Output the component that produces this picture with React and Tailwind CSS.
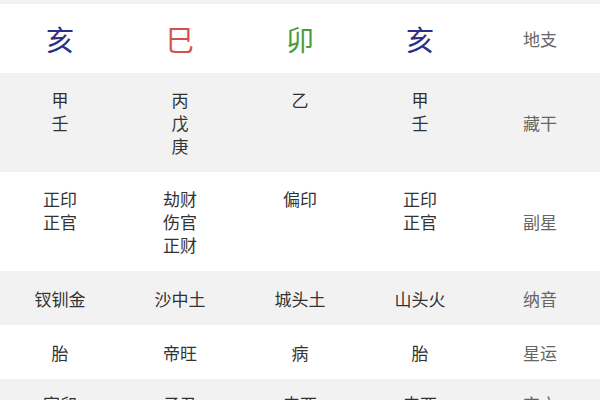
const top = [
  { c: '亥', cls: 'text-[#27318b]' },
  { c: '巳', cls: 'text-[#d5504b]' },
  { c: '卯', cls: 'text-[#4b9a3c]' },
  { c: '亥', cls: 'text-[#27318b]' },
]

const rows = [
  { label: '藏干', bg: 'bg-[#f2f2f2]', pad: 'py-[15px]', cols: [['甲', '壬'], ['丙', '戊', '庚'], ['乙'], ['甲', '壬']] },
  { label: '副星', bg: 'bg-white', pad: 'py-[15px]', cols: [['正印', '正官'], ['劫财', '伤官', '正财'], ['偏印'], ['正印', '正官']] },
  { label: '纳音', bg: 'bg-[#f2f2f2]', pad: 'py-[15.5px]', cols: [['钗钏金'], ['沙中土'], ['城头土'], ['山头火']] },
  { label: '星运', bg: 'bg-white', pad: 'py-[15.5px]', cols: [['胎'], ['帝旺'], ['病'], ['胎']] },
  { label: '空亡', bg: 'bg-[#f2f2f2]', pad: 'py-[13px]', cols: [['寅卯'], ['子丑'], ['申酉'], ['申酉']] },
]

const App = () => {
  return (
    <div className="w-[600px] h-[400px] overflow-hidden bg-white font-['Noto_Sans_CJK_SC',sans-serif]">
      <div className="h-[4px] bg-[#f2f2f2]"></div>
      <div className="grid grid-cols-5 h-[69px] items-center bg-white">
        {top.map((t, i) => (
          <div key={i} className={'text-center text-[28px] leading-none ' + t.cls}>{t.c}</div>
        ))}
        <div className="text-center text-[17px] text-[#666]">地支</div>
      </div>
      {rows.map((r, i) => (
        <div key={i} className={'grid grid-cols-5 ' + r.pad + ' ' + r.bg}>
          {r.cols.map((col, j) => (
            <div key={j} className="flex flex-col items-center text-[17px] leading-[23px] text-[#333]">
              {col.map((s, k) => <div key={k}>{s}</div>)}
            </div>
          ))}
          <div className="flex items-center justify-center text-[17px] leading-[23px] text-[#666]">{r.label}</div>
        </div>
      ))}
    </div>
  )
}

export default App
